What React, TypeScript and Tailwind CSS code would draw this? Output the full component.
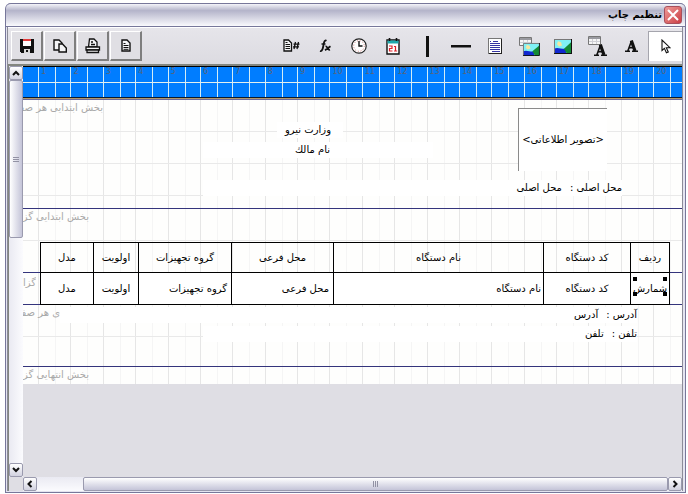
import type { ReactNode } from 'react';
import clsx from 'clsx';

interface Tool {
  label: string;
  icon: ReactNode;
}

const SaveIcon = () => (
  <svg width="14" height="14" viewBox="0 0 14 14" shapeRendering="crispEdges">
    <path d="M0 0h14v14H1l-1-1z" fill="#111" />
    <path d="M3 0h8v7H3z" fill="#fff" />
    <path d="M3 0h8v2H3z" fill="#e23b3b" />
    <path d="M4 10h6v4H4z" fill="#d8d8d8" />
    <path d="M6 11h2v2H6z" fill="#111" />
  </svg>
);

const CopyIcon = () => (
  <svg width="14" height="14" viewBox="0 0 14 14" fill="#f4f4f6" stroke="#111" strokeWidth="1.4">
    <path d="M1 1h5l3 3v7H1z" />
    <path d="M6 5h3.500l3.800 4v4H6z" />
  </svg>
);

const PrinterIcon = () => (
  <svg width="16" height="16" viewBox="0 0 16 16" fill="#f4f4f6" stroke="#111" strokeWidth="1.3">
    <path d="M3.500 9L4.500 1h4.500l3 3v5z" />
    <path d="M6 4h2M6 6.500h4" />
    <path d="M1 9h13.500v3H1z" />
    <path d="M2 12h11.500v2.500H2z" />
  </svg>
);

const PageIcon = () => (
  <svg width="10" height="13" viewBox="0 0 10 13" fill="#f4f4f6" stroke="#111" strokeWidth="1.4">
    <path d="M1 1h5l3 3v8H1z" />
    <path d="M2.500 4.500h2M2.500 6.500h5M2.500 8.500h5M2.500 10.300h5" strokeWidth="1" />
  </svg>
);

const PageNumberIcon = () => (
  <svg width="17" height="14" viewBox="0 0 17 14" fill="#f4f4f6" stroke="#111">
    <path d="M1 1h4.500L8.500 4v8H1z" strokeWidth="1.300" />
    <path d="M2.500 3.500h2M2.500 5.500h4.500M2.500 7.500h4.500M2.500 9.500h4.500" strokeWidth="1" />
    <path d="M12.500 3l-1.500 7M15.500 3L14 10M10.500 5.200h6M10 7.800h6" strokeWidth="1.300" fill="none" />
  </svg>
);

const FunctionIcon = () => (
  <svg width="12" height="14" viewBox="0 0 12 14" fill="none" stroke="#111">
    <path d="M7.500 1.800C5.500.6 5 3 4.500 6S3.300 12.800 1 12" strokeWidth="1.800" />
    <path d="M2.500 5h4" strokeWidth="1.400" />
    <path d="M6.500 7.500c2-.8 2 4 4.500 3.200M11.500 7.300L6 11.300" strokeWidth="1.700" />
  </svg>
);

const ClockIcon = () => (
  <svg width="16" height="16" viewBox="0 0 16 16">
    <circle cx="8" cy="8" r="7.200" fill="#fff" stroke="#222" strokeWidth="1.200" />
    <circle cx="8" cy="8" r="5.300" fill="none" stroke="#c77" strokeWidth="1" strokeDasharray="1 1.780" />
    <path d="M8 3v5h3.500" fill="none" stroke="#111" strokeWidth="1.400" />
  </svg>
);

const CalendarIcon = () => (
  <svg width="14" height="17" viewBox="0 0 14 17">
    <path d="M1 2h12v14H1z" fill="#fff" stroke="#111" strokeWidth="1.400" />
    <path d="M1.500 2.500h11V5.500h-11z" fill="#1fa9ad" />
    <path d="M3.500 0v3M10.500 0v3" stroke="#111" strokeWidth="1.600" />
    <path d="M3 8h3v2.500H3.500V13H6.500M8 8.500h1.500V13M8 13h3.200" fill="none" stroke="#e0232b" strokeWidth="1.200" />
  </svg>
);

const VerticalLineIcon = () => (
  <svg width="3" height="21" viewBox="0 0 3 21">
    <path d="M0 0h3v21H0z" fill="#111" />
  </svg>
);

const HorizontalLineIcon = () => (
  <svg width="20" height="3" viewBox="0 0 20 3">
    <path d="M0 0h20v2.500H0z" fill="#111" />
  </svg>
);

const MemoIcon = () => (
  <svg width="14" height="16" viewBox="0 0 14 16" shapeRendering="crispEdges">
    <path d="M.5.500h13v15H.5z" fill="#fff" stroke="#777" />
    <path d="M2 3.500h1M5 3.500h5M2 5.500h10M2 7.500h10M2 9.500h10M2 11.500h10M4 13.500h8" stroke="#3434a4" />
    <path d="M13.500 1v15M1 15.500h13" stroke="#222" />
  </svg>
);

const Landscape = () => (
  <>
    <path d="M0 0h18v14H0z" fill="#7ff1f5" />
    <path d="M4 2l3 1 1 3-3 1-2-2z" fill="#f6e7a0" />
    <path d="M0 9c4-2 8 1 12 0v5H0z" fill="#1128d0" />
    <path d="M10 9l7-6v11h-4z" fill="#138a35" />
    <path d="M.5 14V.500H18" stroke="#777" fill="none" />
    <path d="M17.500 0v13.500H0" stroke="#111" fill="none" />
  </>
);

const ImageIcon = () => (
  <svg width="18" height="15" viewBox="0 0 18 14" preserveAspectRatio="none">
    <Landscape />
  </svg>
);

const MiniTable = () => (
  <>
    <path d="M.5.500h12v8H.5z" fill="#f6f6f6" stroke="#777" />
    <path d="M1 1h11v2H1z" fill="#9a9aa0" />
    <path d="M1 5.500h11M4.500 3v5M8.500 3v5" stroke="#cfcfd5" />
  </>
);

const DbImageIcon = () => (
  <svg width="21" height="19" viewBox="0 0 21 19">
    <MiniTable />
    <g transform="translate(4 6) scale(.94 .93)">
      <Landscape />
    </g>
  </svg>
);

const BoldLetter = () => (
  <g fill="none" stroke="#111">
    <path d="M0 11.200h5M7 11.200h6M2.800 11L6.300 1.500" strokeWidth="1.600" />
    <path d="M6.300 0.500L10 11" strokeWidth="3.200" />
    <path d="M4 7.700h5" strokeWidth="1.600" />
  </g>
);

const LabelIcon = () => (
  <svg width="13" height="12" viewBox="0 0 13 12">
    <BoldLetter />
  </svg>
);

const DbTextIcon = () => (
  <svg width="19" height="20" viewBox="0 0 19 20">
    <MiniTable />
    <g transform="translate(6 8)">
      <BoldLetter />
    </g>
  </svg>
);

const PointerIcon = () => (
  <svg width="10" height="15" viewBox="0 0 10 15">
    <path d="M1 1v10.500l2.400-2.200 2 4.500 1.900-.9-2-4.200H9z" fill="#fff" stroke="#111" strokeWidth="1.100" />
  </svg>
);

const fileTools: Tool[] = [
  { label: 'ذخیره', icon: <SaveIcon /> },
  { label: 'کپی', icon: <CopyIcon /> },
  { label: 'چاپ', icon: <PrinterIcon /> },
  { label: 'پیش نمایش', icon: <PageIcon /> },
];

const drawTools: Tool[] = [
  { label: 'شماره صفحه', icon: <PageNumberIcon /> },
  { label: 'فرمول', icon: <FunctionIcon /> },
  { label: 'ساعت', icon: <ClockIcon /> },
  { label: 'تاریخ', icon: <CalendarIcon /> },
  { label: 'خط عمودی', icon: <VerticalLineIcon /> },
  { label: 'خط افقی', icon: <HorizontalLineIcon /> },
  { label: 'یادداشت', icon: <MemoIcon /> },
  { label: 'تصویر اطلاعاتی', icon: <DbImageIcon /> },
  { label: 'تصویر', icon: <ImageIcon /> },
  { label: 'متن اطلاعاتی', icon: <DbTextIcon /> },
  { label: 'متن', icon: <LabelIcon /> },
  { label: 'انتخاب', icon: <PointerIcon /> },
];

const columns = [
  { title: 'ردیف', field: 'شمارش', width: 'w-[39px]', align: 'text-center' },
  { title: 'کد دستگاه', field: 'کد دستگاه', width: 'w-[87px]', align: 'text-center' },
  { title: 'نام دستگاه', field: 'نام دستگاه', width: '', align: 'text-right px-[2px]' },
  { title: 'محل فرعی', field: 'محل فرعی', width: 'w-[102px]', align: 'text-right px-1' },
  { title: 'گروه تجهیزات', field: 'گروه تجهیزات', width: 'w-[93px]', align: 'text-right px-1' },
  { title: 'اولویت', field: 'اولویت', width: 'w-[45px]', align: 'text-center' },
  { title: 'مدل', field: 'مدل', width: 'w-[53px]', align: 'text-center' },
];

const bands = [
  { name: 'بخش ابتدایی هر صفحه', height: 'h-[109px]', label: 'w-20' },
  { name: 'بخش ابتدایی گزارش', height: 'h-16', label: 'w-[66px]' },
  { name: 'گزارش', height: 'h-8', label: 'w-[13px] pt-[2px]' },
  { name: 'ی هر صفحه', height: 'h-[62px]', label: 'w-[37px]' },
  { name: 'بخش انتهایی گزارش', height: 'h-[17px]', label: 'w-[66px]' },
];

const centimetres = Array.from({ length: 20 }, (_, i) => i + 1);

function Ruler() {
  return (
    <div className="border-b border-[#6b6a9a]">
      <div className="relative flex h-[33px] border-t border-b border-t-black border-b-[#b59a6a] bg-[#007dff] text-[8px] leading-[10px] text-[#5a6478]">
        <div className="w-[15px] shrink-0" />
        {centimetres.map((n) => (
          <div key={n} className={clsx('flex border-l border-[#d3ecf5]', n === 20 ? 'w-[29px] shrink-0' : 'flex-1')}>
            <span className="w-4 shrink-0 pl-[2px]">{n}</span>
            <span className="flex-1 border-l border-[#d3ecf5]" />
          </div>
        ))}
        <div className="absolute inset-x-0 top-[15px] h-px bg-[#e4f0ee]" />
        <div className="absolute inset-x-0 bottom-0 h-px bg-[#0a1a30]" />
      </div>
    </div>
  );
}

function GridColumns() {
  return (
    <div className="absolute inset-0 flex">
      <div className="w-[15px] shrink-0" />
      {centimetres.map((n) => (
        <div key={n} className={clsx('flex border-l border-[#e6e6e6]', n === 20 ? 'w-[29px] shrink-0' : 'flex-1')}>
          <span className="w-4 shrink-0" />
          <span className="flex-1 border-l border-[#f5f5f5]" />
        </div>
      ))}
    </div>
  );
}

function Handles() {
  return (
    <>
      <i className="absolute top-1 left-[2px] size-1 bg-black" />
      <i className="absolute top-1 right-[2px] size-1 bg-black" />
      <i className="absolute bottom-2 left-[2px] size-1 bg-black" />
      <i className="absolute right-[2px] bottom-2 size-1 bg-black" />
    </>
  );
}

function ReportTable() {
  return (
    <table dir="rtl" className="absolute top-[142px] right-3 left-[17px] w-[calc(100%-29px)] table-fixed border-collapse text-black">
      <thead>
        <tr className="h-[30px]">
          {columns.map((c) => (
            <th key={c.title} className={clsx('border border-black p-0 text-center font-normal', c.width)}>
              {c.title}
            </th>
          ))}
        </tr>
      </thead>
      <tbody>
        <tr className="h-8">
          {columns.map((c, i) => (
            <td key={c.field} className={clsx('relative border border-black bg-white py-0 whitespace-nowrap', c.align)}>
              {c.field}
              {i === 0 && <Handles />}
            </td>
          ))}
        </tr>
      </tbody>
    </table>
  );
}

function Paper() {
  return (
    <div className="relative overflow-hidden bg-[#fefefd] text-[10px] leading-4">
      <GridColumns />
      {bands.map((b, i) => (
        <section
          key={b.name}
          className={clsx(
            'relative bg-[linear-gradient(to_top,#e9e9e9_1px,transparent_1px)] bg-[length:100%_32px]',
            b.height,
            i < bands.length - 1 && 'border-b border-[#34347c]',
          )}
        >
          <div dir="rtl" className={clsx('overflow-hidden whitespace-nowrap text-[#a9a9a9]', b.label)}>
            {b.name}
          </div>
        </section>
      ))}

      {/* report items placed on the bands */}
      <div dir="rtl" className="absolute top-[22px] left-[254px] w-[66px] bg-white pr-3">
        وزارت نیرو
      </div>
      <div dir="rtl" className="absolute top-[42px] left-[180px] w-[230px] bg-white pr-[103px]">
        نام مالك
      </div>
      <div className="absolute top-2 right-[75px] flex h-[63px] w-[89px] items-center justify-center border-t border-l border-[#8a8a8a] bg-white">
        <span dir="rtl">&lt;تصویر اطلاعاتی&gt;</span>
      </div>
      <div dir="rtl" className="absolute top-20 right-[60px] left-[180px] flex gap-2 bg-white">
        <span>محل اصلی :</span>
        <span>محل اصلی</span>
      </div>
      <ReportTable />
      <div dir="rtl" className="absolute top-[207px] right-[45px] left-[37px] flex gap-2 bg-white">
        <span>آدرس :</span>
        <span>آدرس</span>
      </div>
      <div dir="rtl" className="absolute top-[226px] right-[45px] left-[180px] flex gap-2 bg-white">
        <span>تلفن :</span>
        <span>تلفن</span>
      </div>
    </div>
  );
}

interface ArrowProps {
  label: string;
  path: string;
}

function ArrowButton({ label, path }: ArrowProps) {
  return (
    <button
      aria-label={label}
      className="flex size-[14px] shrink-0 items-center justify-center rounded-[2px] border border-[#9a9aae] bg-gradient-to-b from-white to-[#d2d2e0]"
    >
      <svg width="8" height="8" viewBox="0 0 8 8" fill="none" stroke="#111" strokeWidth="2">
        <path d={path} />
      </svg>
    </button>
  );
}

function VerticalScrollbar() {
  return (
    <div className="flex w-[14px] shrink-0 flex-col bg-gradient-to-r from-[#eaeaf2] to-[#fbfbfe]">
      <ArrowButton label="بالا" path="M1 6l3-3 3 3" />
      <div className="flex-1">
        <div className="flex h-[158px] flex-col items-center justify-center gap-px rounded-[2px] border border-[#9a9aae] bg-gradient-to-r from-white to-[#c4c4d8]">
          <i className="h-px w-[6px] bg-[#9292a4]" />
          <i className="h-px w-[6px] bg-[#9292a4]" />
          <i className="h-px w-[6px] bg-[#9292a4]" />
        </div>
      </div>
      <ArrowButton label="پایین" path="M1 2l3 3 3-3" />
    </div>
  );
}

function HorizontalScrollbar() {
  return (
    <div className="flex h-[14px] shrink-0 bg-gradient-to-b from-[#eaeaf2] to-[#fbfbfe]">
      <div className="w-[14px] shrink-0 bg-[#dfdee4]" />
      <ArrowButton label="چپ" path="M5.500 1l-3 3 3 3" />
      <div className="flex flex-1 pl-[46px]">
        <div className="flex flex-1 items-center justify-center gap-px rounded-[2px] border border-[#9a9aae] bg-gradient-to-b from-white to-[#c4c4d8]">
          <i className="h-[6px] w-px bg-[#9292a4]" />
          <i className="h-[6px] w-px bg-[#9292a4]" />
          <i className="h-[6px] w-px bg-[#9292a4]" />
        </div>
      </div>
      <ArrowButton label="راست" path="M2.500 1l3 3-3 3" />
    </div>
  );
}

function TitleBar() {
  return (
    <header
      dir="rtl"
      className="flex h-6 shrink-0 items-center gap-[2px] rounded-t-[5px] border-t border-b border-t-[#77779a] border-b-[#77779a] bg-gradient-to-b from-[#f4f4fa] via-[#b4b4ca] via-30% to-[#fafafd] pr-[3px]"
    >
      <button
        aria-label="بستن"
        className="flex size-[18px] items-center justify-center rounded-[3px] border border-[#a8505c] bg-gradient-to-br from-[#ee9a98] to-[#c93a44]"
      >
        <svg width="12" height="12" viewBox="0 0 12 12" stroke="#fff" strokeWidth="2">
          <path d="M1 1l10 10M11 1L1 11" />
        </svg>
      </button>
      <h1 className="text-[10px] leading-4 font-bold text-black">تنظیم چاپ</h1>
    </header>
  );
}

function Toolbar() {
  return (
    <div className="flex h-[37px] shrink-0 items-center justify-between border-t border-white bg-gradient-to-b from-[#e6e5ea] to-[#dcdbe1] pl-[3px]">
      <div className="flex gap-px">
        {fileTools.map((t) => (
          <button
            key={t.label}
            aria-label={t.label}
            className="flex h-[30px] w-8 items-center justify-center border-t border-r-2 border-b-2 border-l border-t-white border-r-[#7e7e7e] border-b-[#7e7e7e] border-l-white bg-[#e0dfe4]"
          >
            {t.icon}
          </button>
        ))}
      </div>
      <div className="flex">
        {drawTools.map((t, i) => (
          <button
            key={t.label}
            aria-label={t.label}
            className={clsx(
              'flex h-[30px] w-[34px] items-center justify-center',
              i === drawTools.length - 1 && 'border-t border-l border-[#a5a5ad] bg-white',
            )}
          >
            {t.icon}
          </button>
        ))}
      </div>
    </div>
  );
}

export default function App() {
  return (
    <main className="flex h-screen flex-col bg-white pt-[3px] pr-[2px] pb-px pl-[5px] font-['DejaVu_Sans',sans-serif]">
      <div className="flex min-h-0 flex-1 flex-col rounded-t-[6px] border-r border-b border-l border-[#77779a] bg-[#e4e4f0]">
        <TitleBar />
        <div className="mr-[2px] mb-px ml-px flex min-h-0 flex-1 flex-col border-r border-l border-[#8c8c98] bg-[#dfdee4]">
          <Toolbar />
          <div className="flex min-h-0 flex-1 flex-col border-t-2 border-l border-[#83867f]">
            <div className="flex min-h-0 flex-1">
              <VerticalScrollbar />
              <div className="min-w-0 flex-1">
                <Ruler />
                <Paper />
              </div>
            </div>
            <HorizontalScrollbar />
          </div>
        </div>
      </div>
    </main>
  );
}
